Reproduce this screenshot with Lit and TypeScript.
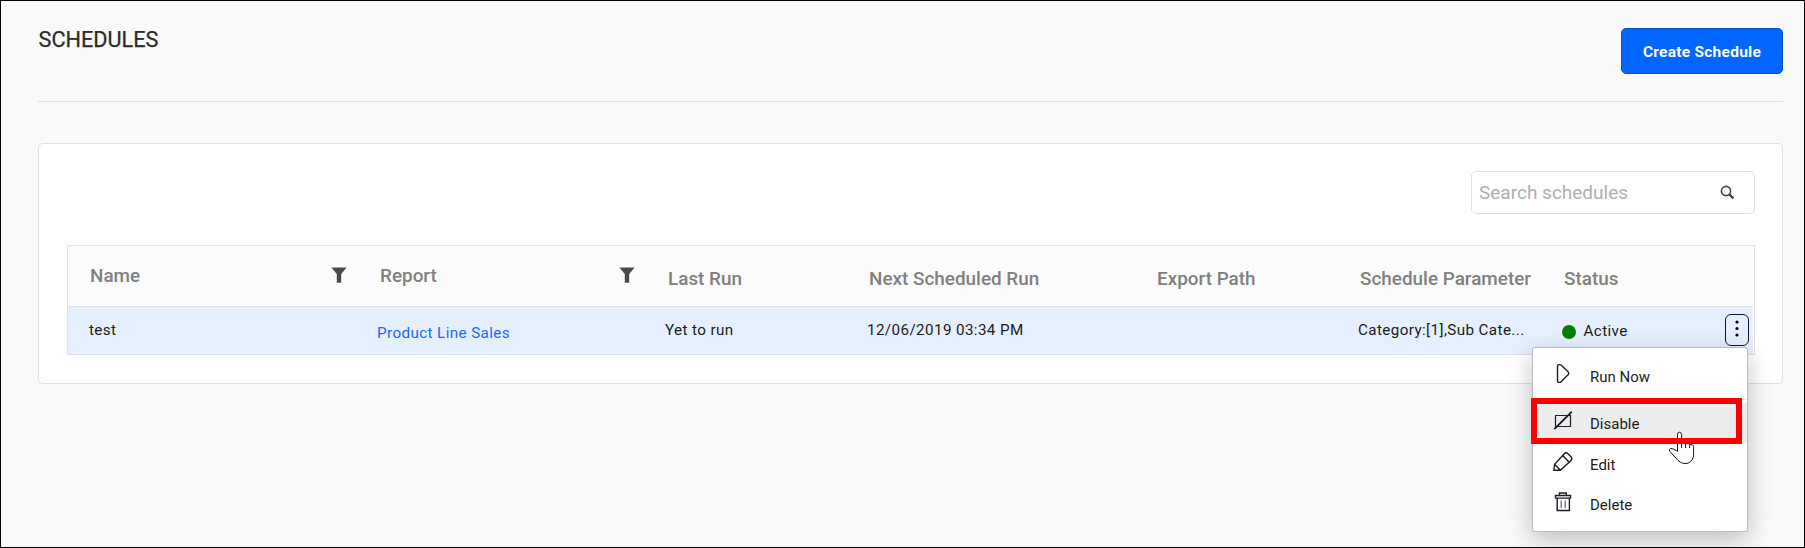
import { LitElement, html, css, svg } from "lit";
import { customElement } from "lit/decorators.js";

const filterIcon = html`<svg class="filter" width="16" height="16" viewBox="0 0 16 16">
  <path d="M.3.5h15.4L10.2 7v8.700H5.800V7z" fill="#4a4a4a" /></svg>`;

const runIcon = svg`<path d="M5 1.600h.6q1 0 1.700.7l7 6.800q1 1.200 0 2.400l-7 7q-.7.9-1.700.9H5q-1.500 0-1.500-1.500V3.100Q3.500 1.600 5 1.600z"/>`;
const disableIcon = svg`<path d="M1.500 5.500h15v11h-15z" stroke-width="1.200"/><path d="M.3 19.200 17.800 1.700" stroke-width="1.900"/>`;
const editIcon = svg`<path d="M0 20.300.6 14.200 10.300 3.700q1.800-1.700 3.700 0l3 3q1.700 1.900 0 3.800L6.400 20.300zM.6 14.200l5.800 6.100M8.700 5.600l6.500 6.700"/>`;
const deleteIcon = svg`<path d="M1.500 4.500h15v2.600h-15zM5.500 4.500V2h6.800v2.500M3.200 7.100v12.400h12.200V7.100"/><path d="M7.200 9.500V17M11.300 9.500V17" stroke="#777"/>`;

@customElement("app-root")
export class AppRoot extends LitElement {
  static styles = css`
    :host { display: block; }
    * { box-sizing: border-box; }
    .page {
      position: relative; height: 548px; border: 1px solid #000; background: #f9f9f9;
      padding: 27px 21px 0 37px; font-family: Roboto, sans-serif; color: #1c1c1c; overflow: hidden;
    }
    .top { display: flex; justify-content: space-between; height: 74px; border-bottom: 1px solid #dee0e2; }
    h1 { margin: 0; padding-left: .5px; font-size: 21.700px; line-height: 24px; font-weight: 400; color: #2b2b2b; -webkit-text-stroke: .25px #2b2b2b; }
    .create {
      width: 162px; height: 46px; border: 1px solid #0052cc; border-radius: 5px; background: #06f;
      color: #fff; font: 700 15.500px Roboto, sans-serif; letter-spacing: .25px; padding: 2px 0 0; white-space: nowrap;
    }
    .card {
      margin-top: 41px; height: 241px; background: #fff; border: 1px solid #dee0e2; border-radius: 5px;
      padding: 27px 27px 0 28px;
    }
    .search {
      margin-left: auto; width: 284px; height: 43px; border: 1px solid #dee0e2; border-radius: 5px;
      display: flex; align-items: center; justify-content: space-between; padding: 0 19px 0 7px;
      font-size: 19px; color: #aeb0b2;
    }
    .table { margin-top: 31px; border: 1px solid #dee0e2; height: 110px; padding-right: 1px; }
    .row { display: grid; }
    .row > div { white-space: nowrap; display: flex; }
    .head {
      grid-template-columns: 290px 288px 201px 288px 203px 204px 1fr;
      height: 61px; background: #fcfcfc; border-bottom: 1px solid #dee0e2; font-size: 18.900px; font-weight: 500;
      color: #808080; line-height: 24px; padding-top: 18px; padding-left: 22px;
    }
    .head .low { padding-top: 3px; }
    .filterable { justify-content: space-between; padding-right: 33px; }
    .filter { margin-top: 3px; }
    .body {
      grid-template-columns: 288px 288px 202px 288px 203px 203px 1fr;
      height: 47px; background: #e5efff; font-size: 15.200px; line-height: 20px; padding: 13px 0 0 21px; letter-spacing: .4px;
    }
    .link { color: #1a66ff; padding-top: 3px; }
    .status { padding-top: 1px; align-items: flex-start; }
    .dot { width: 14px; height: 14px; border-radius: 50%; background: #008000; margin: 4px 8px 0 .5px; }
    .more {
      margin: -7px 4px 0 auto; width: 24px; height: 32px; border: 1px solid #15152a; border-radius: 6px;
      background: transparent; padding: 0 0 3px; display: grid; place-items: center;
    }
    .menu {
      position: absolute; left: 1531px; top: 346px; width: 216px; height: 185px; background: #fff;
      border: 1px solid #bbb; border-radius: 3px; box-shadow: 0 8px 24px rgba(0,0,0,.24); padding-top: 8px;
      font-size: 15px; line-height: 40px;
    }
    .item { display: flex; height: 41px; padding-left: 21px; gap: 17px; }
    .item svg { margin-top: 7px; fill: none; stroke: #1d1d2b; stroke-width: 1.400; overflow: visible; flex: none; }
    .item span { padding-top: 1px; }
    .run { height: 44px; border-bottom: 1px solid #e9e9e9; margin-bottom: 3px; }
    .disable { background: #ededed; height: 40px; }
    .edit span { padding-top: 2px; }
    .mark { position: absolute; left: 1530px; top: 397px; width: 211px; height: 46px; border: 6px solid #f00; }
    .hand { position: absolute; left: 1667px; top: 430px; }
  `;

  private item(icon: unknown, label: string, kind: string) {
    return html`<div class="item ${kind}"><svg width="19" height="20" viewBox="0 0 19 20">${icon}</svg><span>${label}</span></div>`;
  }

  render() {
    return html`<div class="page">
      <div class="top"><h1>SCHEDULES</h1><button class="create">Create Schedule</button></div>
      <div class="card">
        <div class="search"><span>Search schedules</span>
          <svg width="15" height="15" viewBox="0 0 15 15" fill="none" stroke="#444"><circle cx="6" cy="6" r="4.600" stroke-width="1.600"/><path d="m9.300 9.300 4.200 4" stroke-width="2.400"/></svg>
        </div>
        <div class="table">
          <div class="row head">
            <div class="filterable"><span>Name</span>${filterIcon}</div>
            <div class="filterable"><span>Report</span>${filterIcon}</div>
            <div class="low">Last Run</div><div class="low">Next Scheduled Run</div>
            <div class="low">Export Path</div><div class="low">Schedule Parameter</div><div class="low">Status</div>
          </div>
          <div class="row body">
            <div>test</div><div class="link">Product Line Sales</div><div>Yet to run</div>
            <div>12/06/2019 03:34 PM</div><div></div><div>Category:[1],Sub Cate...</div>
            <div class="status"><i class="dot"></i>Active
              <button class="more"><svg width="4" height="18" viewBox="0 0 4 18"><circle cx="2" cy="2" r="1.600"/><circle cx="2" cy="8.500" r="1.600"/><circle cx="2" cy="15" r="1.600"/></svg></button>
            </div>
          </div>
        </div>
      </div>
      <div class="menu">
        ${this.item(runIcon, "Run Now", "run")}${this.item(disableIcon, "Disable", "disable")}
        ${this.item(editIcon, "Edit", "edit")}${this.item(deleteIcon, "Delete", "delete")}
      </div>
      <svg class="hand" width="28" height="35" viewBox="0 0 28 35"><path d="M9.500 20.300V3.400q0-2 2-2.200 2.100.2 2.100 2.200V12q3.500-1 4 .8 3.500-.6 4 .7 4-.3 4 2V25q-1.500 7.500-8.600 7.600-4-.2-7-3.100L2 20.500q-1.500-2.200.5-3.100 1.500-.5 7 2.900z" fill="#fff" stroke="#15152a"/><path d="M13.600 11v6M17.600 13v4M21.600 14v3" stroke="#15152a"/></svg>
      <div class="mark"></div>
    </div>`;
  }
}
